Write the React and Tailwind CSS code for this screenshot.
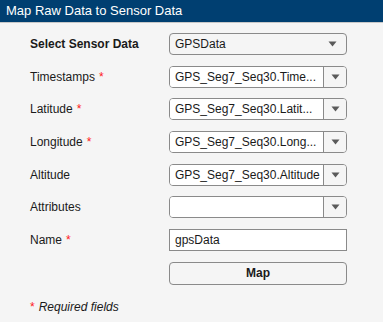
import React from 'react';

const Arrow = () => (
  <svg width="9" height="6" viewBox="0 0 9 6">
    <path d="M0.5 0.5 L8.5 0.5 L4.5 5.5 Z" fill="#5a5a5a" />
  </svg>
);

const Label = ({ children, required, bold }) => (
  <div className={`h-[22px] flex items-center text-[12px] text-[#1a1a1a] whitespace-nowrap ${bold ? 'font-bold' : ''}`}>
    {children}
    {required && <span className="text-[#ff1a1a] ml-[4px]">*</span>}
  </div>
);

const DropDown = ({ value }) => (
  <div className="h-[22px] w-[178px] flex items-center justify-between border border-[#8a8a8a] rounded-[4px] bg-[#f5f5f5] pl-[5px] pr-[9px] text-[12px] text-[#1a1a1a]">
    <span>{value}</span>
    <Arrow />
  </div>
);

const EditDropDown = ({ value }) => (
  <div className="h-[22px] w-[178px] flex border border-[#8a8a8a] rounded-[4px] overflow-hidden text-[12px] text-[#1a1a1a]">
    <div className="flex-1 bg-white pl-[5px] pr-[2px] flex items-center whitespace-nowrap overflow-hidden">{value}</div>
    <div className="w-[23px] border-l border-[#8a8a8a] bg-[#f5f5f5] flex items-center justify-center">
      <Arrow />
    </div>
  </div>
);

const App = () => {
  return (
    <div className="w-[383px] h-[322px] bg-[#f5f5f5] overflow-hidden" style={{ fontFamily: '"Liberation Sans", Arial, sans-serif' }}>
      <div className="h-[23px] bg-[#003f71] border-b border-[#c8c8c8] flex items-center pl-[6px] text-white text-[13px]">
        Map Raw Data to Sensor Data
      </div>
      <div className="flex pt-[10px]">
        <div className="w-[169px] shrink-0 pl-[30px] flex flex-col gap-[10.7px]">
          <Label bold>Select Sensor Data</Label>
          <Label required>Timestamps</Label>
          <Label required>Latitude</Label>
          <Label required>Longitude</Label>
          <Label>Altitude</Label>
          <Label>Attributes</Label>
          <Label required>Name</Label>
        </div>
        <div className="flex flex-col gap-[10.7px]">
          <DropDown value="GPSData" />
          <EditDropDown value="GPS_Seg7_Seq30.Time..." />
          <EditDropDown value="GPS_Seg7_Seq30.Latit..." />
          <EditDropDown value="GPS_Seg7_Seq30.Long..." />
          <EditDropDown value="GPS_Seg7_Seq30.Altitude" />
          <EditDropDown value="" />
          <div className="h-[22px] w-[178px] border border-[#8a8a8a] bg-white pl-[5px] flex items-center text-[12px] text-[#1a1a1a]">gpsData</div>
          <div className="h-[23px] w-[178px] border border-[#8a8a8a] rounded-[4px] bg-[#f5f5f5] flex items-center justify-center text-[12px] font-bold text-[#1a1a1a]">Map</div>
        </div>
      </div>
      <div className="pl-[30px] mt-[13px] text-[12px] italic text-[#1a1a1a]">
        <span className="text-[#ff1a1a] not-italic mr-[4px]">*</span>Required fields
      </div>
    </div>
  );
};

export default App;
